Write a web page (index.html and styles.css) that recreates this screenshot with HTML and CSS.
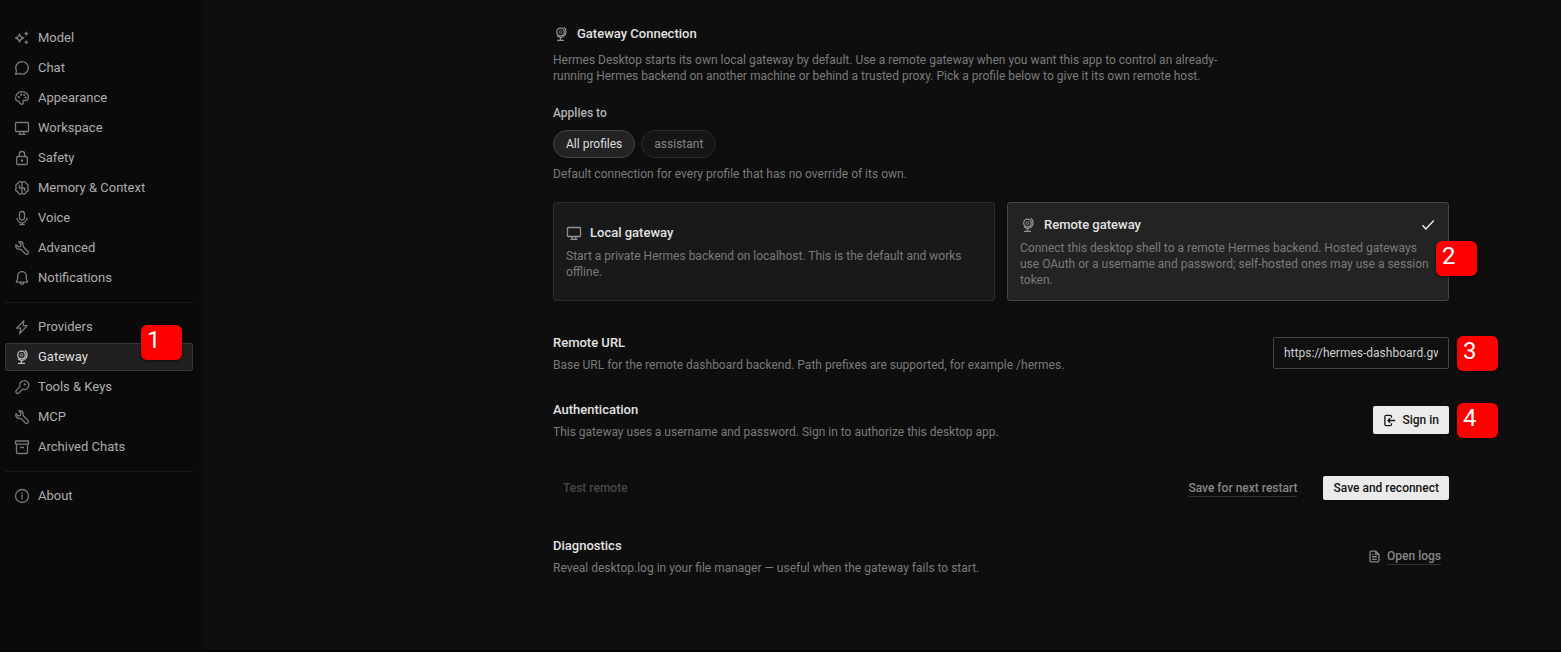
FILE: index.html
```
<!DOCTYPE html>
<html lang="en">
<head>
<meta charset="utf-8">
<meta name="viewport" content="width=device-width, initial-scale=1">
<title>Settings – Gateway</title>
<link rel="stylesheet" href="styles.css">
</head>
<body>
<svg class="sprite" aria-hidden="true">
  <symbol id="i-sparkle" viewBox="0 0 16 16"><path d="M5.600 4c.5 2.700 1.300 3.500 4 4-2.700.5-3.500 1.300-4 4-.5-2.700-1.300-3.500-4-4 2.700-.5 3.500-1.300 4-4z"/><path class="solid" d="M12.300 1c.5 1.800 1 2.300 2.600 2.700-1.600.4-2.100.9-2.600 2.700-.5-1.800-1-2.300-2.600-2.700 1.600-.4 2.100-.9 2.600-2.700zM12.300 9.600c.5 1.800 1 2.300 2.600 2.700-1.600.4-2.100.9-2.600 2.700-.5-1.800-1-2.300-2.600-2.700 1.600-.4 2.100-.9 2.600-2.700z"/></symbol>
  <symbol id="i-chat" viewBox="0 0 16 16"><path d="M8.200 1.700a6.200 6.200 0 1 1-2.900 11.700L1.600 14.300l.9-3.500A6.200 6.200 0 0 1 8.200 1.700z"/></symbol>
  <symbol id="i-palette" viewBox="0 0 16 16"><path d="M1.700 9.300C1 5 4 1.600 8 1.600c3.700 0 6.500 2.600 6.500 6 0 2.600-2.200 3.300-3.900 2.700-1.300-.4-2 .2-1.500 1.300.6 1.600-.3 2.900-1.900 2.600-1.400-.3-1.600-1.800-2.300-2.800-.8-1-2.800-.2-3.200-2.100z"/><circle class="solid" cx="4.800" cy="7.200" r="1.100"/><circle class="solid" cx="7.200" cy="4.700" r="1.100"/><circle class="solid" cx="10.300" cy="5" r="1.100"/><circle class="solid" cx="11.700" cy="7.700" r="1.100"/></symbol>
  <symbol id="i-screen" viewBox="0 0 16 16"><rect x="1.500" y="2.500" width="13" height="9" rx=".8"/><path d="M6.200 11.500v2.800M9.800 11.500v2.800M4.500 14.300h7"/></symbol>
  <symbol id="i-lock" viewBox="0 0 16 16"><rect x="2.700" y="6.500" width="10.600" height="8" rx="1.200"/><path d="M5.300 6.500V4.200a2.700 2.700 0 0 1 5.400 0v2.300"/><circle class="solid" cx="8" cy="10.500" r="1.200"/></symbol>
  <symbol id="i-brain" viewBox="0 0 16 16"><path d="M8 3.300C7.600 1 4.200 1.200 4 3.700 1.800 3.800 1.200 6 2.300 7.700c-1.200 1.500-.7 3.800 1.600 4.100.4 2.700 3.600 3.100 4.100.8zM8 3.300c.4-2.300 3.800-2.100 4 .4 2.200.1 2.800 2.300 1.700 4 1.200 1.500.7 3.800-1.600 4.100-.4 2.700-3.600 3.100-4.100.8M5.200 8h5.600M5.400 5.300V8M10.600 8v3"/></symbol>
  <symbol id="i-mic" viewBox="0 0 16 16"><rect x="5.500" y="1.500" width="5" height="8.500" rx="2.500"/><path d="M3 7.800a5 5 0 0 0 10 0M8 12.800v2M5.300 14.500h5.400"/></symbol>
  <symbol id="i-wrench" viewBox="0 0 16 16"><path d="M4.800 1.800 7 4 6.500 6.300 4.200 6.800 2 4.600C.9 7.400 3.500 10 6.500 9.100l5 4.900c1.700 1.300 3.900-.8 2.500-2.500L9.100 6.500C10 3.500 7.600.9 4.800 1.800z"/></symbol>
  <symbol id="i-bell" viewBox="0 0 16 16"><path d="M8 1.700c-2.500 0-4.300 1.900-4.300 4.300v3l-1.400 3.100h11.400L12.300 9V6c0-2.400-1.800-4.300-4.300-4.300zM6.200 12.300a1.800 1.900 0 0 0 3.600 0"/></symbol>
  <symbol id="i-bolt" viewBox="0 0 16 16"><path d="M9.800 1.700 2.700 9.200h4l-1 5.300 7.600-7.900H9.200z"/></symbol>
  <symbol id="i-globe" viewBox="0 0 16 16"><circle cx="7.500" cy="6" r="3.800"/><circle class="faint" cx="7.500" cy="6" r="1.300"/><path d="M10.800 1.300c3.200 2.400 3 7.200-.3 9.200-2.200 1.200-4.800.8-6.500-.7M7.500 11.200v3.200M4 14.400h7"/></symbol>
  <symbol id="i-key" viewBox="0 0 16 16"><path d="M9.900 1.600a4.500 4.500 0 1 1-1.300 8.600L4.800 14c-1.500 1.300-3.800-.6-2.600-2.400l3.700-4A4.500 4.500 0 0 1 9.900 1.600z"/><circle class="solid" cx="10.700" cy="5.400" r="1.100"/></symbol>
  <symbol id="i-archive" viewBox="0 0 16 16"><rect x="1.500" y="2" width="13" height="3.200" rx=".5"/><path d="M2.500 5.200v8.300c0 .6.400 1 1 1h9c.6 0 1-.4 1-1V5.200M6 8.500h4"/></symbol>
  <symbol id="i-info" viewBox="0 0 16 16"><circle cx="8" cy="8" r="6.500"/><path d="M7 7.300h1v3.900M8 4.500v1.300"/></symbol>
  <symbol id="i-check" viewBox="0 0 16 16"><path d="m2.500 8.200 3.300 3.700 8-8.400"/></symbol>
  <symbol id="i-signin" viewBox="0 0 16 16"><path d="M10.500 4.500V3.300c0-1-.7-1.700-1.700-1.700H4c-1 0-1.700.7-1.700 1.700v9.400c0 1 .7 1.700 1.700 1.700h4.800c1 0 1.700-.7 1.700-1.700v-1.200M15 8H6.300M8.800 5.300 6.100 8l2.700 2.700"/></symbol>
  <symbol id="i-file" viewBox="0 0 16 16"><path d="M9.500 1.500H4c-.8 0-1.500.7-1.500 1.500v10c0 .8.700 1.500 1.500 1.500h8c.8 0 1.500-.7 1.500-1.500V5.500zM9.500 1.500v4h4M5.200 8.300h5.600M5.200 11.500h5.600M5.200 5.500h1.500"/></symbol>
</svg>

<div class="app">
  <nav class="sidebar" aria-label="Settings">
    <div class="nav-group">
      <button class="nav-item" type="button"><svg class="icon"><use href="#i-sparkle"/></svg>Model</button>
      <button class="nav-item" type="button"><svg class="icon"><use href="#i-chat"/></svg>Chat</button>
      <button class="nav-item" type="button"><svg class="icon"><use href="#i-palette"/></svg>Appearance</button>
      <button class="nav-item" type="button"><svg class="icon"><use href="#i-screen"/></svg>Workspace</button>
      <button class="nav-item" type="button"><svg class="icon"><use href="#i-lock"/></svg>Safety</button>
      <button class="nav-item" type="button"><svg class="icon"><use href="#i-brain"/></svg>Memory &amp; Context</button>
      <button class="nav-item" type="button"><svg class="icon"><use href="#i-mic"/></svg>Voice</button>
      <button class="nav-item" type="button"><svg class="icon"><use href="#i-wrench"/></svg>Advanced</button>
      <button class="nav-item" type="button"><svg class="icon"><use href="#i-bell"/></svg>Notifications</button>
    </div>
    <div class="nav-group">
      <button class="nav-item" type="button"><svg class="icon"><use href="#i-bolt"/></svg>Providers</button>
      <div class="marked">
        <button class="nav-item active" type="button" aria-current="page"><svg class="icon"><use href="#i-globe"/></svg>Gateway</button>
        <span class="marker marker-nav">1</span>
      </div>
      <button class="nav-item" type="button"><svg class="icon"><use href="#i-key"/></svg>Tools &amp; Keys</button>
      <button class="nav-item" type="button"><svg class="icon"><use href="#i-wrench"/></svg>MCP</button>
      <button class="nav-item" type="button"><svg class="icon"><use href="#i-archive"/></svg>Archived Chats</button>
    </div>
    <div class="nav-group">
      <button class="nav-item" type="button"><svg class="icon"><use href="#i-info"/></svg>About</button>
    </div>
  </nav>

  <main class="main">
    <div class="content">
      <header class="intro">
        <h1 class="title"><svg class="icon"><use href="#i-globe"/></svg>Gateway Connection</h1>
        <p class="desc intro-text">Hermes Desktop starts its own local gateway by default. Use a remote gateway when you want this app to control an already-running Hermes backend on another machine or behind a trusted proxy. Pick a profile below to give it its own remote host.</p>
      </header>

      <section class="applies">
        <h2 class="label">Applies to</h2>
        <div class="pills">
          <button class="pill selected" type="button" aria-pressed="true">All profiles</button>
          <button class="pill" type="button" aria-pressed="false">assistant</button>
        </div>
        <p class="desc">Default connection for every profile that has no override of its own.</p>
      </section>

      <section class="cards">
        <button class="card" type="button" aria-pressed="false">
          <span class="card-title"><svg class="icon"><use href="#i-screen"/></svg>Local gateway</span>
          <span class="desc">Start a private Hermes backend on localhost. This is the default and works offline.</span>
        </button>
        <div class="marked">
          <button class="card selected" type="button" aria-pressed="true">
            <span class="card-title"><svg class="icon"><use href="#i-globe"/></svg>Remote gateway<svg class="icon check"><use href="#i-check"/></svg></span>
            <span class="desc">Connect this desktop shell to a remote Hermes backend. Hosted gateways use OAuth or a username and password; self-hosted ones may use a session token.</span>
          </button>
          <span class="marker marker-card">2</span>
        </div>
      </section>

      <section class="row row-url">
        <div class="row-text">
          <label class="row-title" for="remote-url">Remote URL</label>
          <p class="desc">Base URL for the remote dashboard backend. Path prefixes are supported, for example /hermes.</p>
        </div>
        <div class="marked">
          <input class="field" id="remote-url" type="text" value="https://hermes-dashboard.gw.example">
          <span class="marker marker-url">3</span>
        </div>
      </section>

      <section class="row row-auth">
        <div class="row-text">
          <h2 class="row-title">Authentication</h2>
          <p class="desc">This gateway uses a username and password. Sign in to authorize this desktop app.</p>
        </div>
        <div class="marked">
          <button class="button large" type="button"><svg class="icon small"><use href="#i-signin"/></svg>Sign in</button>
          <span class="marker marker-auth">4</span>
        </div>
      </section>

      <div class="actions">
        <button class="ghost" type="button" disabled>Test remote</button>
        <button class="link" type="button"><span class="link-text">Save for next restart</span></button>
        <button class="button" type="button">Save and reconnect</button>
      </div>

      <section class="row row-logs">
        <div class="row-text">
          <h2 class="row-title">Diagnostics</h2>
          <p class="desc">Reveal desktop.log in your file manager — useful when the gateway fails to start.</p>
        </div>
        <button class="link logs" type="button"><svg class="icon small"><use href="#i-file"/></svg><span class="link-text">Open logs</span></button>
      </section>
    </div>
  </main>
</div>
</body>
</html>
```
FILE: styles.css
```
*, *::before, *::after { box-sizing: border-box; }

body {
  margin: 0;
  background: #0e0e0e;
  color: #e2e2e2;
  font-family: Roboto, "Noto Sans", sans-serif;
  font-size: 13px;
  line-height: 20px;
}

h1, h2, p { margin: 0; font-size: inherit; font-weight: inherit; }
button, input { font: inherit; color: inherit; margin: 0; }

.sprite { position: absolute; width: 0; height: 0; }

.icon {
  flex: none;
  width: 16px;
  height: 16px;
  fill: none;
  stroke: currentColor;
  stroke-width: 1.3;
  stroke-linejoin: round;
}
.icon.small { width: 13px; height: 13px; stroke-width: 1.6; }
.solid { fill: currentColor; stroke: none; }
.faint { opacity: 0.6; }

.app {
  display: flex;
  min-height: 100vh;
  border-bottom: 2px solid #050505;
}

/* Sidebar */
.sidebar {
  flex: none;
  width: 203px;
  padding: 24px 10px 24px 5px;
  background: #0a0a0a;
}
.nav-group { display: flex; flex-direction: column; gap: 2px; }
.nav-group + .nav-group {
  margin-top: 10px;
  padding-top: 10px;
  border-top: 1px solid #191919;
}
.nav-item {
  display: flex;
  align-items: center;
  gap: 8px;
  width: 100%;
  height: 28px;
  padding: 0 8px;
  border: 1px solid transparent;
  border-radius: 2px;
  background: none;
  color: #adadad;
  text-align: left;
}
.nav-item .icon { color: #7a7a7a; }
.nav-item.active { background: #202020; border-color: #363636; color: #dedede; }
.nav-item.active .icon { color: #bcbcbc; }

/* Numbered markers */
.marked { position: relative; display: flex; }
.marker {
  position: absolute;
  width: 41px;
  height: 35px;
  padding: 0 6px;
  border-radius: 6px;
  background: #ff0000;
  box-shadow: 0 1px 3px rgba(0, 0, 0, 0.6);
  color: #fff;
  font-size: 24px;
  line-height: 31px;
}
.marker-nav { top: -18px; right: 11px; }
.marker-card { top: 39px; right: -28px; }
.marker-url { top: -1px; left: calc(100% + 8px); }
.marker-auth { top: -3px; left: calc(100% + 8px); }

/* Content */
.main { flex: 1; min-width: 0; padding: 24px 112px; }
.content { max-width: 896px; margin-left: auto; }

.desc { display: block; color: #7a7a7a; font-size: 12px; line-height: 16px; font-weight: 400; }

.title { display: flex; align-items: center; gap: 8px; font-weight: 500; }
.title .icon, .card-title .icon { color: #929292; }
.intro-text { max-width: 680px; margin-top: 8px; }

.applies { margin-top: 19px; }
.label { color: #b4b4b4; font-size: 12px; font-weight: 500; }
.pills { display: flex; gap: 6px; margin: 7px 0 8px; }
.pill {
  height: 28px;
  padding: 0 12px;
  border: 1px solid #2a2a2a;
  border-radius: 14px;
  background: #151515;
  color: #848484;
  font-size: 12px;
}
.pill.selected { border-color: #444; background: #232323; color: #dcdcdc; }

.cards { display: grid; grid-template-columns: 1fr 1fr; gap: 12px; margin-top: 20px; }
.card {
  display: flex;
  flex-direction: column;
  justify-content: center;
  gap: 5px;
  width: 100%;
  padding: 12px;
  border: 1px solid #2c2c2c;
  border-radius: 3px;
  background: #191919;
  text-align: left;
}
.card.selected { border-color: #454545; background: #232323; }
.card-title { display: flex; align-items: center; gap: 8px; font-weight: 500; }
.card-title .check { margin-left: auto; color: #e6e6e6; stroke-width: 1.5; }

.row { display: flex; align-items: center; justify-content: space-between; gap: 24px; }
.row-title { display: block; font-weight: 500; }
.row-text .desc { margin-top: 4px; }
.row-url { margin-top: 32px; }
.row-auth { margin-top: 27px; }
.row-logs { margin-top: 36px; }

.field {
  width: 176px;
  height: 32px;
  padding: 0 10px;
  border: 1px solid #444;
  border-radius: 2px;
  background: #101010;
  color: #cfcfcf;
  font-size: 12px;
}

.actions { display: flex; align-items: center; margin-top: 36px; }
.button {
  display: flex;
  align-items: center;
  gap: 6px;
  height: 24px;
  padding: 0 10px;
  border: 0;
  border-radius: 2px;
  background: #ebebeb;
  color: #161616;
  font-size: 12px;
  font-weight: 500;
}
.button.large { height: 28px; }
.ghost {
  margin-right: auto;
  padding: 0 10px;
  border: 0;
  background: none;
  color: #464646;
  font-size: 12px;
  font-weight: 500;
}
.link {
  display: flex;
  align-items: center;
  gap: 6px;
  padding: 0;
  border: 0;
  background: none;
  color: #868686;
  font-size: 12px;
  font-weight: 500;
  line-height: 16px;
}
.link-text { border-bottom: 1px solid #303030; }
.actions .link { margin-right: 26px; }
.link.logs { margin-right: 8px; }
```
